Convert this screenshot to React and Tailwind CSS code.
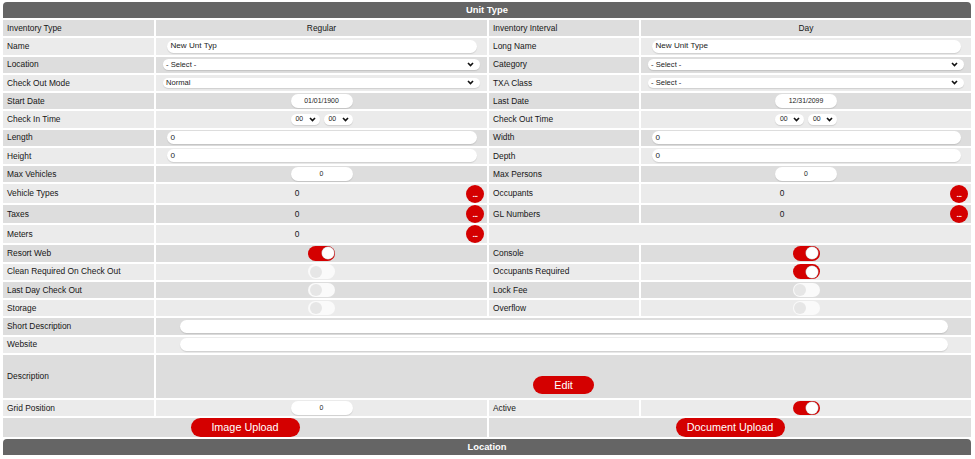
const grid = "grid grid-cols-[151px_331px_150px_330px] gap-x-[2px]";
const dark = "*:bg-[#dddddd]";
const light = "*:bg-[#ebebeb]";

function Row({ tone, className = "h-[16.25px]", children }) {
  return <div className={`${grid} ${tone} ${className}`}>{children}</div>;
}

function Label({ children }) {
  return (
    <div className="flex items-center pl-[4px] text-[8.4px] text-[#161616] whitespace-nowrap">
      {children}
    </div>
  );
}

function Text({ children }) {
  return (
    <div className="flex items-center justify-center text-[8.4px] text-[#161616]">{children}</div>
  );
}

function Input({ value, className = "mx-[10.5px]" }) {
  return (
    <div className="flex items-center">
      <div
        className={`${className} flex-1 h-[13px] rounded-full bg-white shadow-[0_1px_1px_rgba(0,0,0,0.12)] flex items-center pl-[4px] text-[8.1px] text-[#222]`}
      >
        {value}
      </div>
    </div>
  );
}

function Chevron() {
  return (
    <svg width="7" height="5" viewBox="0 0 7 5" className="shrink-0">
      <path d="M1 1 L3.5 3.6 L6 1" fill="none" stroke="#111" strokeWidth="1.6" />
    </svg>
  );
}

function Select({ value }) {
  return (
    <div className="flex items-center">
      <div className="mx-[7px] flex-1 h-[10.5px] rounded-full bg-white shadow-[0_1px_1px_rgba(0,0,0,0.12)] flex items-center justify-between pl-[3px] pr-[6px] text-[7.6px] text-[#222]">
        <span>{value}</span>
        <Chevron />
      </div>
    </div>
  );
}

function Small({ value }) {
  return (
    <div className="flex items-center justify-center">
      <div className="w-[62px] h-[13.5px] rounded-full bg-white shadow-[0_1px_1px_rgba(0,0,0,0.12)] flex items-center justify-center text-[6.9px] text-[#222]">
        {value}
      </div>
    </div>
  );
}

function Time() {
  return (
    <div className="flex items-center justify-center gap-[4px]">
      {[0, 1].map((i) => (
        <div
          key={i}
          className="w-[29px] h-[10.5px] rounded-full bg-white shadow-[0_1px_1px_rgba(0,0,0,0.12)] flex items-center justify-between pl-[5px] pr-[4px] text-[6.9px] text-[#222]"
        >
          <span>00</span>
          <Chevron />
        </div>
      ))}
    </div>
  );
}

function Dots() {
  return (
    <div className="flex items-center">
      <div className="w-[282px] text-center text-[8.4px] text-[#161616]">0</div>
      <div className="flex-1 flex justify-end pr-[3px]">
        <div className="w-[18px] h-[18px] rounded-full bg-[#d40000] flex items-center justify-center pt-[2px] text-[8px] font-bold tracking-[-0.5px] text-white leading-none">
          ...
        </div>
      </div>
    </div>
  );
}

function Toggle({ on }) {
  return (
    <div className="flex items-center justify-center">
      <div
        className={`w-[27px] h-[14.5px] rounded-full flex items-center px-[1.5px] ${
          on ? "bg-[#d40000] justify-end" : "bg-[#fafafa] justify-start"
        }`}
      >
        <div
          className={`w-[12px] h-[12px] rounded-full ${
            on ? "bg-white shadow-[0_0_0_0.5px_#bbb]" : "bg-[#e6e6e6]"
          }`}
        />
      </div>
    </div>
  );
}

function RedButton({ children, className }) {
  return (
    <div
      className={`${className} h-[18.5px] rounded-full bg-[#d40000] flex items-center justify-center text-[10.8px] text-white`}
    >
      {children}
    </div>
  );
}

function Bar({ title }) {
  return (
    <div className="h-[16px] rounded-t-[4px] bg-[#656565] flex items-center justify-center text-[9.4px] font-bold text-white">
      {title}
    </div>
  );
}

function WideInput() {
  return (
    <div className="col-span-3 flex items-center">
      <div className="ml-[24px] mr-[23px] flex-1 h-[13px] rounded-full bg-white shadow-[0_1px_1px_rgba(0,0,0,0.12)]" />
    </div>
  );
}

export default function App() {
  return (
    <div className="w-[975px] h-[459px] overflow-hidden bg-white pt-[2px] px-[3px] flex flex-col gap-[2px] font-['Liberation_Sans',Arial,sans-serif]">
      <div className="w-[968px] flex flex-col gap-[2px]">
        <Bar title="Unit Type" />

        <Row tone={dark}>
          <Label>Inventory Type</Label>
          <Text>Regular</Text>
          <Label>Inventory Interval</Label>
          <Text>Day</Text>
        </Row>
        <Row tone={light}>
          <Label>Name</Label>
          <Input value="New Unt Typ" />
          <Label>Long Name</Label>
          <Input value="New Unit Type" />
        </Row>
        <Row tone={dark}>
          <Label>Location</Label>
          <Select value="- Select -" />
          <Label>Category</Label>
          <Select value="- Select -" />
        </Row>
        <Row tone={light}>
          <Label>Check Out Mode</Label>
          <Select value="Normal" />
          <Label>TXA Class</Label>
          <Select value="- Select -" />
        </Row>
        <Row tone={dark}>
          <Label>Start Date</Label>
          <Small value="01/01/1900" />
          <Label>Last Date</Label>
          <Small value="12/31/2099" />
        </Row>
        <Row tone={light}>
          <Label>Check In Time</Label>
          <Time />
          <Label>Check Out Time</Label>
          <Time />
        </Row>
        <Row tone={dark}>
          <Label>Length</Label>
          <Input value="0" />
          <Label>Width</Label>
          <Input value="0" />
        </Row>
        <Row tone={light}>
          <Label>Height</Label>
          <Input value="0" />
          <Label>Depth</Label>
          <Input value="0" />
        </Row>
        <Row tone={dark}>
          <Label>Max Vehicles</Label>
          <Small value="0" />
          <Label>Max Persons</Label>
          <Small value="0" />
        </Row>
        <Row tone={light} className="h-[19px]">
          <Label>Vehicle Types</Label>
          <Dots />
          <Label>Occupants</Label>
          <Dots />
        </Row>
        <Row tone={dark} className="h-[18px]">
          <Label>Taxes</Label>
          <Dots />
          <Label>GL Numbers</Label>
          <Dots />
        </Row>
        <Row tone={light} className="h-[18px]">
          <Label>Meters</Label>
          <Dots />
          <div className="col-span-2" />
        </Row>
        <Row tone={dark}>
          <Label>Resort Web</Label>
          <Toggle on />
          <Label>Console</Label>
          <Toggle on />
        </Row>
        <Row tone={light}>
          <Label>Clean Required On Check Out</Label>
          <Toggle />
          <Label>Occupants Required</Label>
          <Toggle on />
        </Row>
        <Row tone={dark}>
          <Label>Last Day Check Out</Label>
          <Toggle />
          <Label>Lock Fee</Label>
          <Toggle />
        </Row>
        <Row tone={light}>
          <Label>Storage</Label>
          <Toggle />
          <Label>Overflow</Label>
          <Toggle />
        </Row>
        <Row tone={dark}>
          <Label>Short Description</Label>
          <WideInput />
        </Row>
        <Row tone={light}>
          <Label>Website</Label>
          <WideInput />
        </Row>
        <Row tone={dark} className="h-[43px]">
          <Label>Description</Label>
          <div className="col-span-3 flex items-end justify-center pb-[3.5px]">
            <RedButton className="w-[61px]">Edit</RedButton>
          </div>
        </Row>
        <Row tone={light}>
          <Label>Grid Position</Label>
          <Small value="0" />
          <Label>Active</Label>
          <Toggle on />
        </Row>
        <Row tone={dark} className="h-[19px]">
          <div className="col-span-2 flex items-center justify-center">
            <RedButton className="w-[109px]">Image Upload</RedButton>
          </div>
          <div className="col-span-2 flex items-center justify-center">
            <RedButton className="w-[109px]">Document Upload</RedButton>
          </div>
        </Row>

        <Bar title="Location" />
      </div>
    </div>
  );
}
